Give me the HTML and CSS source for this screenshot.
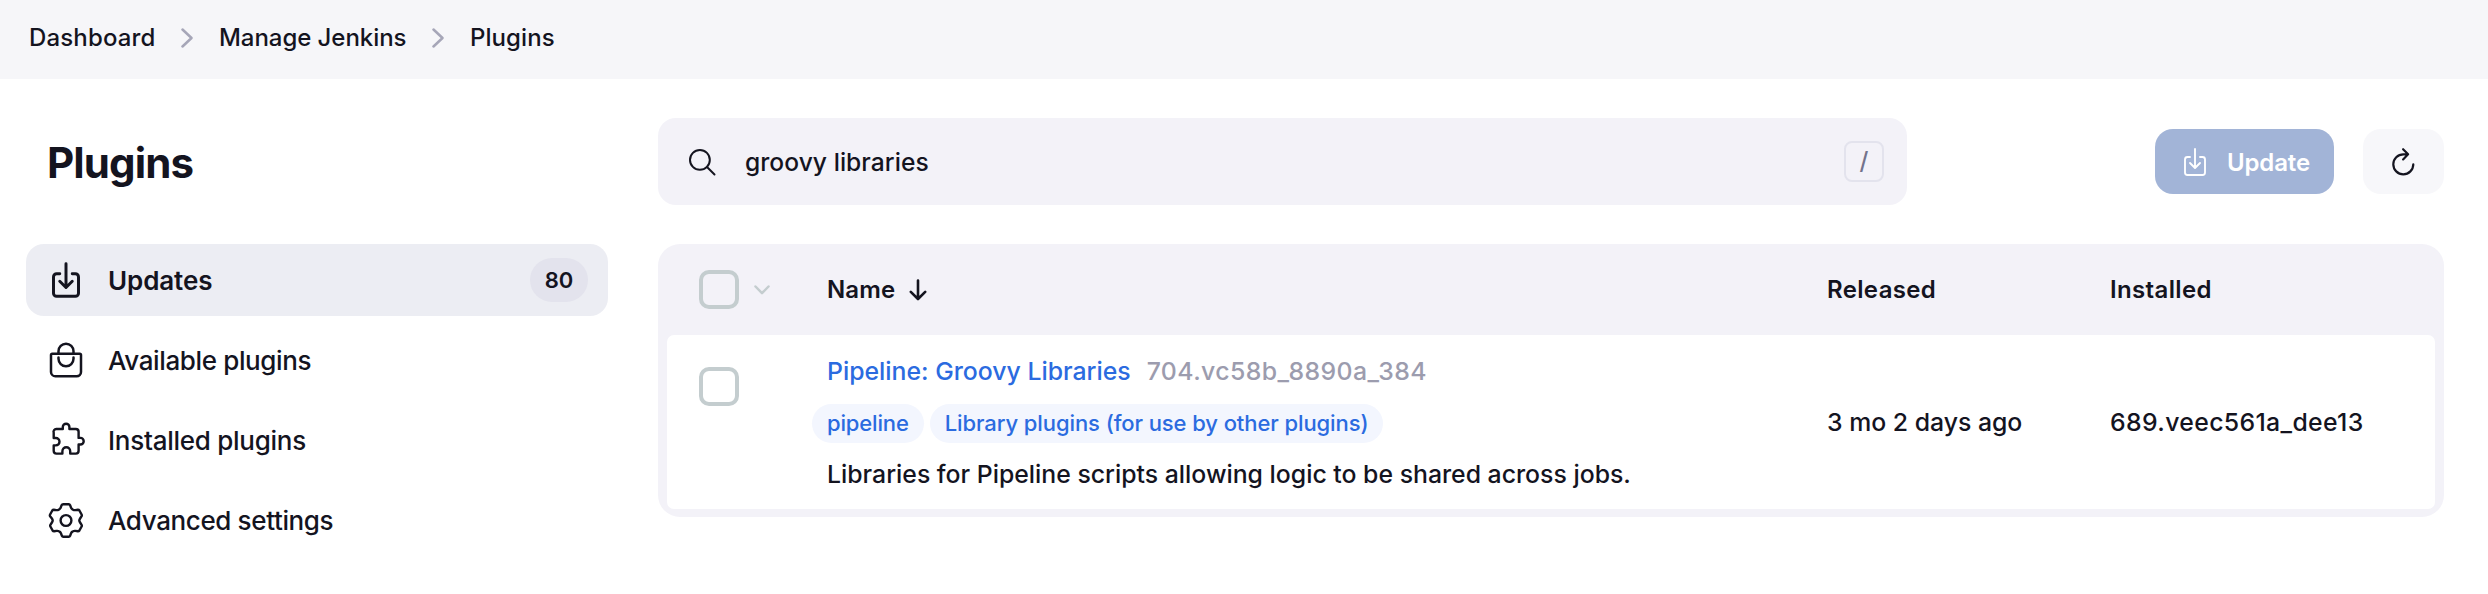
FILE: index.html
```html
<!DOCTYPE html>
<html lang="en">
<head>
<meta charset="utf-8">
<title>Plugins</title>
<link rel="stylesheet" href="styles.css">
</head>
<body>
<nav class="breadcrumbs">
  <a class="crumb crumb-dashboard">Dashboard</a>
  <svg class="crumb-chevron" viewBox="0 0 12 20"><path d="M1.5 1.5 10.5 10l-9 8.5"/></svg>
  <a class="crumb crumb-manage">Manage Jenkins</a>
  <svg class="crumb-chevron" viewBox="0 0 12 20"><path d="M1.5 1.5 10.5 10l-9 8.5"/></svg>
  <a class="crumb crumb-plugins">Plugins</a>
</nav>
<div class="page">
  <aside class="side-panel">
    <h1 class="title">Plugins</h1>
    <ul class="tasks">
      <li class="task task-active">
        <svg class="icon icon-bold" viewBox="0 0 512 512"><path d="M336 176h40a40 40 0 0 1 40 40v208a40 40 0 0 1-40 40H136a40 40 0 0 1-40-40V216a40 40 0 0 1 40-40h40M176 272l80 80 80-80M256 48v288"/></svg>
        <span class="task-label label-updates">Updates</span>
        <span class="badge">80</span>
      </li>
      <li class="task">
        <svg class="icon" viewBox="0 0 512 512"><path d="M80 176a16 16 0 0 0-16 16v216c0 30.2 25.8 56 56 56h272c30.2 0 56-24.5 56-54.8V192a16 16 0 0 0-16-16zM160 176v-32a96 96 0 0 1 192 0v32M160 224v16a96 96 0 0 0 192 0v-16"/></svg>
        <span class="task-label label-available">Available plugins</span>
      </li>
      <li class="task">
        <svg class="icon icon-thin" viewBox="0 0 40 40"><path d="M10.500 9h6.300V7a3.300 3.300 0 0 1 6.600 0v2h6.400a2.800 2.800 0 0 1 2.800 2.800v6.100h1.800a3.300 3.300 0 0 1 0 6.600h-1.800v6.300a2.800 2.800 0 0 1-2.800 2.800h-5.600v-2.400a3.900 3.900 0 0 0-7.800 0v2.400H10.500a2.800 2.800 0 0 1-2.800-2.800v-5.400h2.100a3.700 3.700 0 0 0 0-7.400H7.700v-5.200A2.800 2.800 0 0 1 10.500 9z"/></svg>
        <span class="task-label label-installed">Installed plugins</span>
      </li>
      <li class="task">
        <svg class="icon icon-thin" viewBox="0 0 40 40"><circle cx="20" cy="20.500" r="5.400"/><path d="M17.300 4.200h5.400q1 0 1.400 1l.9 2.500q.4 1.100 1.500 1.700l.6.300q1 .6 2.200.4l2.600-.4q1 0 1.500.8l2.200 4q.5.900 0 1.700l-1.500 2.300q-.8 1.200-.8 2t.8 2l1.500 2.300q.5.800 0 1.700l-2.200 4q-.5.800-1.500.8l-2.600-.4q-1.200-.2-2.200.4l-.6.300q-1.100.6-1.500 1.700l-.9 2.500q-.4 1-1.400 1h-5.400q-1 0-1.400-1l-.9-2.500q-.4-1.100-1.500-1.700l-.6-.3q-1-.6-2.200-.4l-2.600.4q-1 0-1.500-.8l-2.200-4q-.5-.9 0-1.700l1.500-2.300q.8-1.200.8-2t-.8-2L4.100 16.200q-.5-.8 0-1.700l2.200-4q.5-.8 1.500-.8l2.600.4q1.200.2 2.200-.4l.6-.3q1.100-.6 1.500-1.700l.9-2.500q.4-1 1.700-1z"/></svg>
        <span class="task-label label-advanced">Advanced settings</span>
      </li>
    </ul>
  </aside>
  <main class="main">
    <div class="app-bar">
      <label class="search">
        <svg class="search-icon" viewBox="0 0 28 28"><circle cx="11.900" cy="11.900" r="9.900"/><path d="m19 19 7.500 7.500"/></svg>
        <span class="search-text">groovy libraries</span>
        <kbd class="key">/</kbd>
      </label>
      <div class="controls">
        <button class="button button-update">
          <svg class="button-icon" viewBox="0 0 512 512"><path d="M336 176h40a40 40 0 0 1 40 40v208a40 40 0 0 1-40 40H136a40 40 0 0 1-40-40V216a40 40 0 0 1 40-40h40M176 272l80 80 80-80M256 48v288"/></svg>
          <span class="update-label">Update</span>
        </button>
        <button class="button button-refresh" aria-label="Check now">
          <svg class="button-icon" viewBox="0.7 0 32 32"><path d="M20.300 8.300H16a10 10 0 1 0 10 10M15.800 3.200l5 5.100-5 5.100"/></svg>
        </button>
      </div>
    </div>
    <div class="table">
      <div class="row head">
        <div class="cell-check"><span class="checkbox"></span><svg class="check-chevron" viewBox="0 0 16 10"><path d="m1.500 1.500 6.500 6.700 6.500-6.700"/></svg></div>
        <div class="cell-name"><span class="head-name">Name</span><svg class="sort-arrow" viewBox="0 0 18 22"><path d="M9 1.500v18M1.800 12.800 9 20l7.200-7.200"/></svg></div>
        <div class="cell-released head-released">Released</div>
        <div class="cell-installed head-installed">Installed</div>
      </div>
      <div class="row body">
        <div class="cell-check"><span class="checkbox"></span></div>
        <div class="cell-name">
          <div class="plugin"><a class="plugin-link">Pipeline: Groovy Libraries</a><span class="plugin-version">704.vc58b_8890a_384</span></div>
          <div class="tags"><a class="tag tag-pipeline">pipeline</a><a class="tag tag-library">Library plugins (for use by other plugins)</a></div>
          <div class="description">Libraries for Pipeline scripts allowing logic to be shared across jobs.</div>
        </div>
        <div class="cell-released value-released">3 mo 2 days ago</div>
        <div class="cell-installed value-installed">689.veec561a_dee13</div>
      </div>
    </div>
  </main>
</div>
</body>
</html>
```
FILE: styles.css
```css
* { box-sizing: border-box; }
body {
  margin: 0;
  min-height: 594px;
  background: #fff;
  color: #14141f;
  font: 500 24px/30px Inter, sans-serif;
  white-space: nowrap;
}
svg {
  flex: none;
  fill: none;
  stroke: currentColor;
  stroke-linecap: round;
  stroke-linejoin: round;
}
.breadcrumbs {
  display: flex;
  align-items: center;
  height: 79px;
  padding: 0 0 4px 29px;
  background: #f6f6f9;
}
.crumb-dashboard { width: 152px; letter-spacing: 0.15px; }
.crumb-manage { width: 213px; margin-left: 26px; letter-spacing: -0.05px; }
.crumb-plugins { margin-left: 26px; letter-spacing: 0.08px; }
.crumb-chevron { width: 12px; height: 20px; color: #a6a6b8; stroke-width: 2.5; }
.page { display: flex; gap: 50px; padding: 39px 44px 0 26px; }
.side-panel { width: 582px; flex: none; }
.title {
  height: 87px;
  margin: 0 0 39px;
  padding-left: 21px;
  font-size: 42px;
  font-weight: 700;
  letter-spacing: -0.9px;
  line-height: 89px;
}
.tasks {
  display: flex;
  flex-direction: column;
  gap: 8px;
  margin: 0;
  padding: 0;
  list-style: none;
}
.task {
  display: flex;
  align-items: center;
  gap: 22px;
  height: 72px;
  padding: 0 20px;
  border-radius: 18px;
  font-size: 26px;
}
.task-active { background: #ecedf3; font-weight: 600; }
.task-label { padding-top: 2px; letter-spacing: -0.37px; }
.label-updates { letter-spacing: -0.1px; }
.label-installed { letter-spacing: -0.26px; }
.icon { width: 40px; height: 40px; stroke-width: 32; }
.icon-bold { stroke-width: 38; }
.icon-thin { stroke-width: 2.4; }
.badge {
  width: 58px;
  height: 44px;
  margin-left: auto;
  border-radius: 22px;
  background: #e3e3ed;
  font-size: 22px;
  line-height: 44px;
  text-align: center;
}
.main { flex: 1; }
.app-bar { display: flex; justify-content: space-between; align-items: center; height: 87px; }
.search {
  display: flex;
  align-items: center;
  width: 1249px;
  height: 87px;
  padding: 0 23px 0 30px;
  border-radius: 18px;
  background: #f3f2f8;
}
.search-icon { width: 28px; height: 28px; margin-right: 29px; stroke-width: 2; }
.search-text { padding-top: 1px; font-size: 24.6px; letter-spacing: 0.04px; }
.key {
  width: 40px;
  height: 41px;
  margin-left: auto;
  border: 2px solid #e3e3ed;
  border-radius: 8px;
  color: #73738c;
  font: 500 24px/36px Inter, sans-serif;
  text-align: center;
}
.controls { display: flex; gap: 29px; }
.button {
  display: flex;
  align-items: center;
  justify-content: center;
  height: 65px;
  padding: 0;
  border: 0;
  border-radius: 18px;
  font: 600 24px/30px Inter, sans-serif;
}
.button-icon { width: 32px; height: 32px; }
.button-update { gap: 16px; width: 179px; background: #a2b4d7; color: #fff; stroke-width: 30; }
.update-label { padding-top: 2px; letter-spacing: -0.1px; }
.button-refresh { width: 81px; background: #f7f7fa; color: #14141f; stroke-width: 2.2; }
.table {
  margin-top: 39px;
  padding: 0 9px 8px;
  border-radius: 22px;
  background: #f3f2f8;
}
.row { display: flex; align-items: center; }
.head { height: 91px; font-weight: 600; }
.head-name { letter-spacing: 0.1px; }
.head-released, .head-installed { letter-spacing: 0.35px; }
.body { height: 174px; border-radius: 7px; background: #fff; font-size: 24.8px; }
.cell-check { display: flex; align-items: center; gap: 15px; width: 160px; padding-left: 32px; }
.body .cell-check { align-self: flex-start; padding-top: 32px; }
.checkbox { width: 40px; height: 39px; border: 4px solid #c4cdcf; border-radius: 10px; }
.check-chevron { width: 16px; height: 10px; color: #c4cdcf; stroke-width: 2.5; }
.cell-name { width: 1000px; }
.head .cell-name { display: flex; align-items: center; }
.body .cell-name { align-self: flex-start; padding-top: 8px; }
.sort-arrow { width: 18px; height: 22px; margin-left: 14px; stroke-width: 2.6; }
.cell-released { width: 283px; }
.value-installed { letter-spacing: 0.36px; }
.plugin { display: flex; gap: 16px; height: 55px; align-items: center; margin-bottom: 6px; }
.plugin-link { color: #2b6be0; }
.plugin-version { color: #9c9cae; letter-spacing: 0.43px; }
.tags { display: flex; gap: 6px; margin: 0 0 0 -15px; }
.tag {
  height: 39px;
  padding: 0 15px;
  border-radius: 20px;
  background: #f3f6fe;
  color: #2b6be0;
  font-size: 22px;
  line-height: 39px;
}
.tag-pipeline { letter-spacing: -0.15px; }
.tag-library { letter-spacing: -0.09px; }
.description { line-height: 63px; }
```
